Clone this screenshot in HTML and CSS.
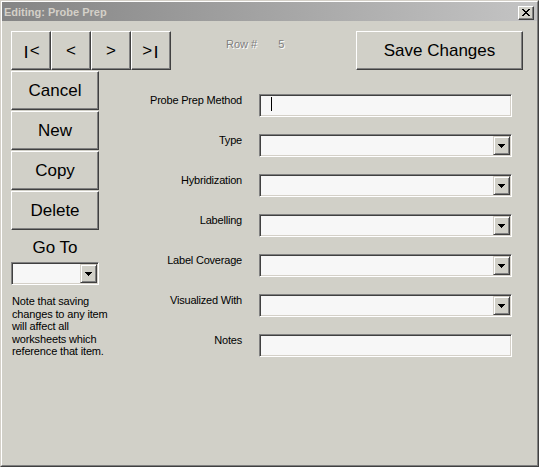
FILE: index.html
```html
<!DOCTYPE html>
<html>
<head>
<meta charset="utf-8">
<title>Editing: Probe Prep</title>
<link rel="stylesheet" href="styles.css">
</head>
<body>
<div class="window">
  <div class="frame">
    <div class="titlebar">
      <span class="title">Editing: Probe Prep</span>
      <button class="close" aria-label="Close">
        <svg width="8" height="7" viewBox="0 0 8 7" shape-rendering="crispEdges"><path d="M0 0h2v1H0zM6 0h2v1H6zM1 1h2v1H1zM5 1h2v1H5zM2 2h4v1H2zM3 3h2v1H3zM2 4h4v1H2zM1 5h2v1H1zM5 5h2v1H5zM0 6h2v1H0zM6 6h2v1H6z" fill="#000"/></svg>
      </button>
    </div>
    <div class="body">
      <div class="toprow">
        <div class="nav">
          <button class="btn nav-btn"><span class="bar">|</span>&lt;</button>
          <button class="btn nav-btn">&lt;</button>
          <button class="btn nav-btn">&gt;</button>
          <button class="btn nav-btn">&gt;<span class="bar">|</span></button>
        </div>
        <div class="rowinfo"><span>Row #</span><span class="rownum">5</span></div>
        <button class="btn save">Save Changes</button>
      </div>
      <div class="main">
        <div class="side">
          <button class="btn side-btn">Cancel</button>
          <button class="btn side-btn">New</button>
          <button class="btn side-btn">Copy</button>
          <button class="btn side-btn">Delete</button>
          <div class="goto-label">Go To</div>
          <div class="field combo goto">
            <span class="dd"><svg width="7" height="4" viewBox="0 0 7 4" shape-rendering="crispEdges"><path d="M0 0h7v1H0zM1 1h5v1H1zM2 2h3v1H2zM3 3h1v1H3z" fill="#000"/></svg></span>
          </div>
          <p class="note">Note that saving<br>changes to any item<br>will affect all<br>worksheets which<br>reference that item.</p>
        </div>
        <div class="form">
          <label class="lbl">Probe Prep Method</label>
          <div class="field text"><span class="caret"></span></div>

          <label class="lbl">Type</label>
          <div class="field combo"><span class="dd"><svg width="7" height="4" viewBox="0 0 7 4" shape-rendering="crispEdges"><path d="M0 0h7v1H0zM1 1h5v1H1zM2 2h3v1H2zM3 3h1v1H3z" fill="#000"/></svg></span></div>

          <label class="lbl">Hybridization</label>
          <div class="field combo"><span class="dd"><svg width="7" height="4" viewBox="0 0 7 4" shape-rendering="crispEdges"><path d="M0 0h7v1H0zM1 1h5v1H1zM2 2h3v1H2zM3 3h1v1H3z" fill="#000"/></svg></span></div>

          <label class="lbl">Labelling</label>
          <div class="field combo"><span class="dd"><svg width="7" height="4" viewBox="0 0 7 4" shape-rendering="crispEdges"><path d="M0 0h7v1H0zM1 1h5v1H1zM2 2h3v1H2zM3 3h1v1H3z" fill="#000"/></svg></span></div>

          <label class="lbl">Label Coverage</label>
          <div class="field combo"><span class="dd"><svg width="7" height="4" viewBox="0 0 7 4" shape-rendering="crispEdges"><path d="M0 0h7v1H0zM1 1h5v1H1zM2 2h3v1H2zM3 3h1v1H3z" fill="#000"/></svg></span></div>

          <label class="lbl">Visualized With</label>
          <div class="field combo"><span class="dd"><svg width="7" height="4" viewBox="0 0 7 4" shape-rendering="crispEdges"><path d="M0 0h7v1H0zM1 1h5v1H1zM2 2h3v1H2zM3 3h1v1H3z" fill="#000"/></svg></span></div>

          <label class="lbl">Notes</label>
          <div class="field text"></div>
        </div>
      </div>
    </div>
  </div>
</div>
</body>
</html>
```
FILE: styles.css
```css
* { box-sizing: border-box; }

body {
  margin: 0;
  font-family: "Liberation Sans", Arial, sans-serif;
  background: #d1d0c8;
  color: #000;
}

.window {
  width: 539px;
  height: 467px;
  border: 1px solid;
  border-color: #d4d0c8 #404040 #404040 #d4d0c8;
  background: #d1d0c8;
  display: flex;
  flex-direction: column;
}

.frame {
  flex: 1;
  border: 1px solid;
  border-color: #ffffff #808080 #808080 #ffffff;
  display: flex;
  flex-direction: column;
}

.titlebar {
  height: 19px;
  display: flex;
  align-items: center;
  justify-content: space-between;
  padding: 0 3px 0 2px;
  background: linear-gradient(to right, #848484, #c4c4c4);
}

.title {
  color: #d4d0c8;
  font-weight: bold;
  font-size: 11px;
  letter-spacing: 0;
}

.close {
  width: 16px;
  height: 14px;
  margin: 2px 0 0 0;
  padding: 0;
  background: #d1d0c8;
  border: 1px solid;
  border-color: #ffffff #404040 #404040 #ffffff;
  box-shadow: inset -1px -1px #808080;
  display: flex;
  align-items: center;
  justify-content: center;
}

.body {
  flex: 1;
  padding: 10px 14px 0 9px;
}

.btn {
  margin: 0;
  padding: 0;
  font-family: "Liberation Sans", Arial, sans-serif;
  font-size: 17px;
  color: #000;
  background: #d1d0c8;
  border: 1px solid;
  border-color: #ffffff #404040 #404040 #ffffff;
  box-shadow: inset -1px -1px #808080;
}

.toprow {
  display: flex;
  height: 39px;
}

.nav {
  display: flex;
}

.nav-btn {
  width: 40px;
  height: 39px;
  padding-top: 1px;
}

.bar {
  font-weight: bold;
  font-size: 13px;
  margin: 0 2px;
  position: relative;
  top: -1px;
}

.rowinfo {
  margin-left: 55px;
  padding-top: 7px;
  display: flex;
  gap: 21px;
  font-size: 11px;
  line-height: 13px;
  color: #808080;
  text-shadow: 1px 1px 0 #ffffff;
}

.save {
  margin-left: auto;
  width: 167px;
  height: 39px;
}

.main {
  display: flex;
  margin-top: 1px;
}

.side {
  width: 88px;
  display: flex;
  flex-direction: column;
}

.side-btn {
  height: 39px;
  margin-bottom: 1px;
}

.goto-label {
  margin-top: 7px;
  font-size: 17px;
  line-height: 20px;
  text-align: center;
}

.field {
  height: 23px;
  background: #f7f7f7;
  border: 1px solid;
  border-color: #808080 #ffffff #ffffff #808080;
  box-shadow: inset 1px 1px #404040, inset -1px -1px #d4d0c8;
  padding: 1px;
  display: flex;
}

.combo {
  justify-content: flex-end;
}

.goto {
  margin-top: 4px;
  width: 88px;
}

.dd {
  width: 17px;
  height: 19px;
  background: #d1d0c8;
  border: 1px solid;
  border-color: #d4d0c8 #404040 #404040 #d4d0c8;
  box-shadow: inset 1px 1px #ffffff, inset -1px -1px #808080;
  display: flex;
  align-items: center;
  justify-content: center;
}

.caret {
  width: 1px;
  height: 14px;
  margin: 1px 0 0 10px;
  background: #000;
}

.note {
  margin: 10px 0 0 1px;
  font-size: 11px;
  line-height: 12.6px;
  letter-spacing: -0.15px;
  white-space: nowrap;
}

.form {
  display: grid;
  grid-template-columns: 143px 253px;
  grid-auto-rows: 23px;
  column-gap: 17px;
  row-gap: 17px;
  padding-top: 23px;
}

.lbl {
  text-align: right;
  font-size: 11px;
  line-height: 13px;
  letter-spacing: -0.2px;
}
```
